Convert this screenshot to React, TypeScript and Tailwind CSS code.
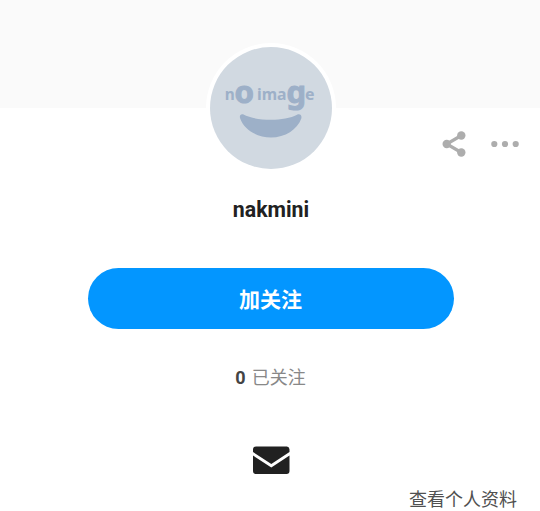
interface IconProps {
  className?: string;
}

function NoImageAvatar({ className }: IconProps) {
  return (
    <svg viewBox="0 0 122 122" className={className} role="img" aria-label="no image">
      <circle cx="61" cy="61" r="61" fill="#d1d9e1" />
      <g fill="#9db0c8" className="font-['Noto_Sans','Open_Sans',sans-serif] font-bold">
        <text x="14.8" y="52.6" fontSize="16" textLength="10" lengthAdjust="spacingAndGlyphs">n</text>
        <text x="24.6" y="56" fontSize="30" textLength="19.5" lengthAdjust="spacingAndGlyphs" stroke="#9db0c8" strokeWidth="1">o</text>
        <text x="47" y="52.6" fontSize="16" textLength="29.5" lengthAdjust="spacingAndGlyphs">ima</text>
        <text x="76.4" y="56" fontSize="30" textLength="19.5" lengthAdjust="spacingAndGlyphs" stroke="#9db0c8" strokeWidth="1">g</text>
        <text x="95" y="52.6" fontSize="16" textLength="9.5" lengthAdjust="spacingAndGlyphs">e</text>
      </g>
      <path
        d="M33 67.300C41 71.500 51 72.800 61 72.800S80 71.500 88 67.300C90.500 66.700 92 68.500 91.300 71.500C87.500 82.500 75 90.500 61 90.500S34 82.500 30.200 71.500C29.200 68.500 30.500 66.700 33 67.300Z"
        fill="#9db0c8"
      />
    </svg>
  );
}

function ShareIcon({ className }: IconProps) {
  return (
    <svg viewBox="0 0 24 26" className={className} fill="#adadad">
      <path d="M19.300 4.500L4.700 13L19.300 21.500" fill="none" stroke="#adadad" strokeWidth="3.200" />
      <circle cx="19.300" cy="4.500" r="4.200" />
      <circle cx="4.700" cy="13" r="4.200" />
      <circle cx="19.300" cy="21.500" r="4.200" />
    </svg>
  );
}

function MoreIcon({ className }: IconProps) {
  return (
    <svg viewBox="0 0 28 8" className={className} fill="#adadad">
      <circle cx="3.300" cy="4" r="3.100" />
      <circle cx="14" cy="4" r="3.100" />
      <circle cx="24.700" cy="4" r="3.100" />
    </svg>
  );
}

function MailIcon({ className }: IconProps) {
  return (
    <svg viewBox="0 0 37 28" className={className} fill="#212121">
      <path d="M3 0.500H34A3 3 0 0 1 36.500 3.500V6L18.300 18L0 6V3.500A3 3 0 0 1 3 0.500Z" />
      <path d="M0 9.500L18.300 21.500L36.500 9.500V25A3 3 0 0 1 33.500 28H3A3 3 0 0 1 0 25Z" />
    </svg>
  );
}

export default function App() {
  return (
    <div className="flex h-[511px] w-[540px] flex-col overflow-hidden bg-white font-['Roboto','Noto_Sans_CJK_SC',sans-serif]">
      <header className="h-[107.5px] shrink-0 bg-[#fafafa]" />

      <main className="relative flex flex-1 flex-col items-center pl-0.5">
        {/* Avatar overlaps the banner */}
        <div className="-mt-[65px] size-[130px] shrink-0 rounded-full bg-white p-1">
          <NoImageAvatar className="size-full" />
        </div>

        <div className="absolute top-[23.5px] right-[21px] flex items-center gap-[25px]">
          <button aria-label="分享">
            <ShareIcon className="block h-[26px] w-6" />
          </button>
          <button aria-label="更多">
            <MoreIcon className="block h-2 w-7" />
          </button>
        </div>

        <h1 className="mt-[23px] text-[21.3px] leading-7 font-bold text-[#212121]">nakmini</h1>

        <button className="mt-[44.9px] h-[61px] w-[366px] shrink-0 rounded-full bg-[#0396ff] pt-[3px] pr-px text-[21px] font-bold text-white">
          加关注
        </button>

        <p className="mt-[37px] mr-px flex items-center gap-1.5 text-lg leading-6 text-[#888888]">
          <span className="font-bold text-[#444444]">0</span>
          <span>已关注</span>
        </p>

        <button className="mt-[56px]" aria-label="邮件">
          <MailIcon className="block h-7 w-[37px]" />
        </button>

        <a className="mt-[13.2px] mr-[23px] self-end text-lg leading-6 whitespace-nowrap text-[#505050]">
          查看个人资料
        </a>
      </main>
    </div>
  );
}
